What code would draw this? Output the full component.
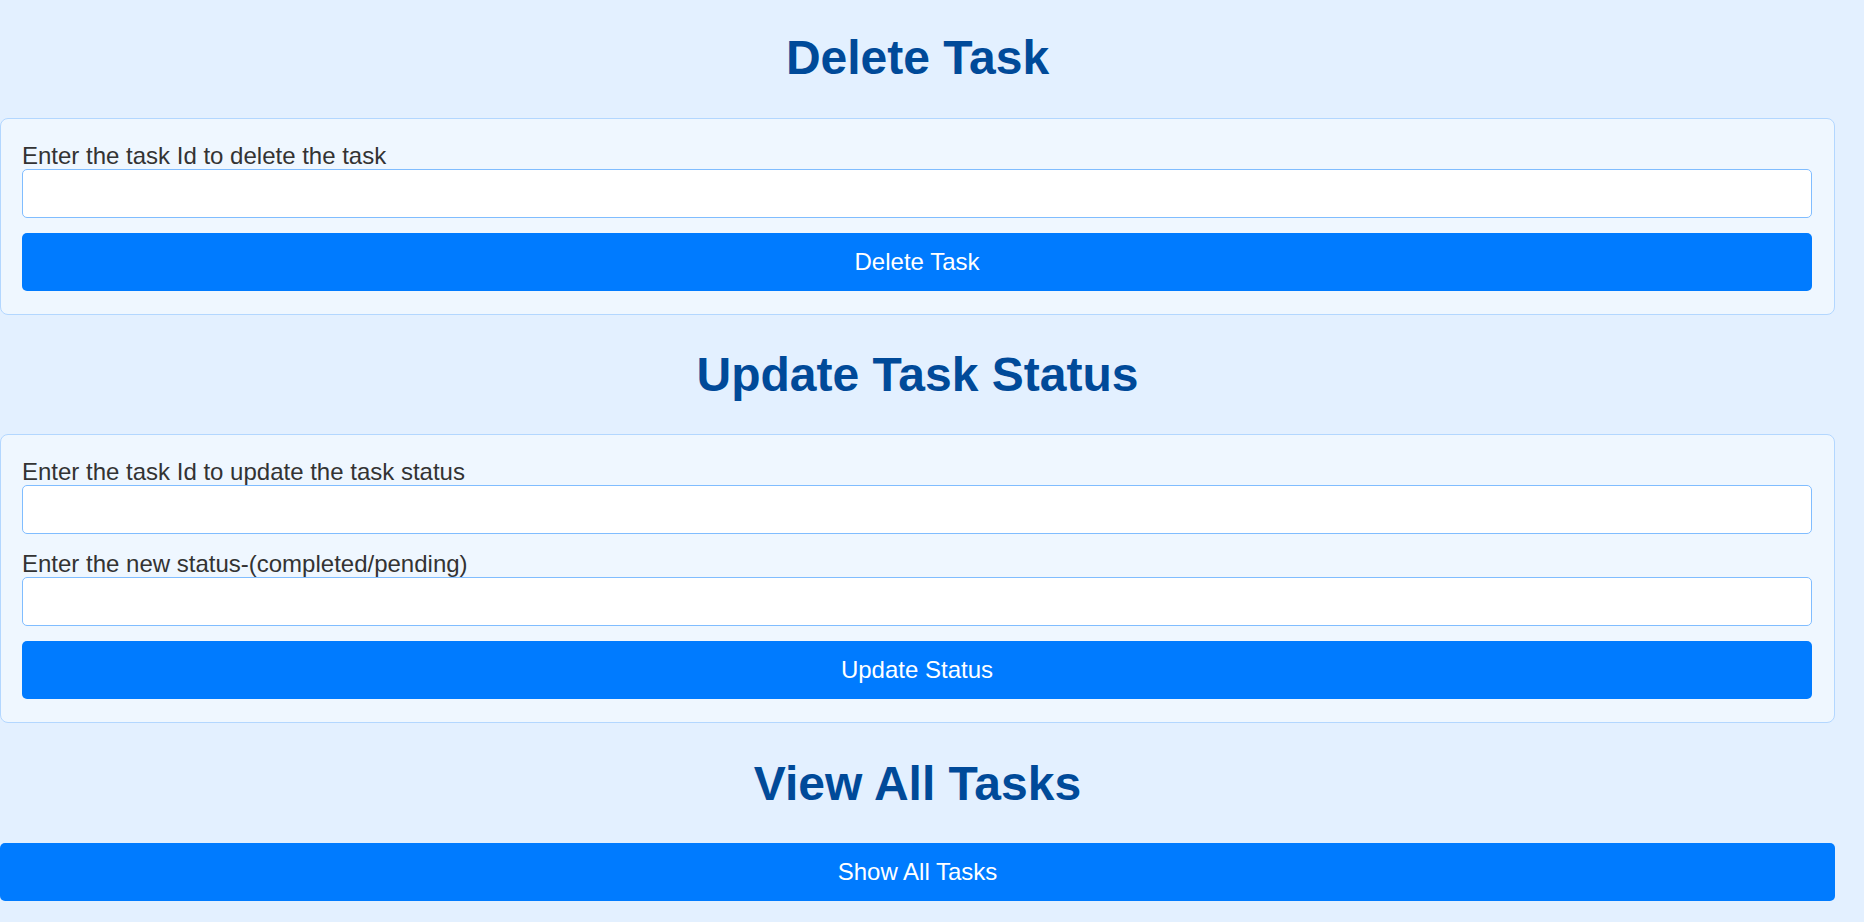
export default function App() {
  const font = { fontFamily: '"Liberation Sans", Arial, sans-serif' };
  const heading =
    "text-center text-[48px] leading-[55px] font-bold text-[#004a99]";
  const label = "block text-[24px] leading-[26px] text-[#333333]";
  const input =
    "block w-full h-[49px] bg-white border border-[#80bdff] rounded-[5px] outline-none px-2";
  const button =
    "flex items-center justify-center w-full h-[58px] bg-[#007bff] text-white text-[24px] rounded-[5px]";
  const card =
    "w-[1835px] bg-[#eff7ff] border border-[#b3d7ff] rounded-[8px] pt-[24px] pb-[23px] pl-[21px] pr-[22px]";

  return (
    <div className="min-h-screen bg-[#e3f0ff] pt-[30px]" style={font}>
      <div className="w-[1835px]">
        <h2 className={heading}>Delete Task</h2>
        <div className={`${card} mt-[33px]`}>
          <label className={label}>Enter the task Id to delete the task</label>
          <input className={input} type="text" />
          <button className={`${button} mt-[15px]`}>Delete Task</button>
        </div>

        <h2 className={`${heading} mt-[32px]`}>Update Task Status</h2>
        <div className={`${card} mt-[32px]`}>
          <label className={label}>Enter the task Id to update the task status</label>
          <input className={input} type="text" />
          <label className={`${label} mt-[17px]`}>
            Enter the new status-(completed/pending)
          </label>
          <input className={input} type="text" />
          <button className={`${button} mt-[15px]`}>Update Status</button>
        </div>

        <h2 className={`${heading} mt-[33px]`}>View All Tasks</h2>
        <button className={`${button} mt-[32px]`}>Show All Tasks</button>
      </div>
    </div>
  );
}
